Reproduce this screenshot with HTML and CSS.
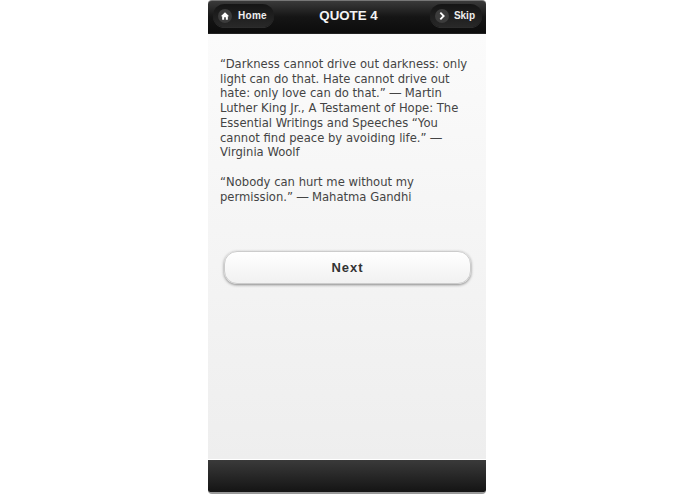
FILE: index.html
```html
<!DOCTYPE html>
<html lang="en">
<head>
  <meta charset="UTF-8" />
  <title>Quote 4</title>
  <link rel="stylesheet" href="styles.css">
</head>
<body>
  <div class="phone">
    <div class="header">
      <a class="head-btn" href="#">
        <span class="icon">
          <svg viewBox="0 0 12 12" width="10" height="10"><path d="M6 1.5 1 6.2h1.6V10.5h2.4V7.6h2V10.5h2.4V6.2H11z" fill="#fff"/></svg>
        </span>Home
      </a>
      <h1>QUOTE 4</h1>
      <a class="head-btn skip" href="#">
        <span class="icon">
          <svg viewBox="0 0 12 12" width="10" height="10"><path d="M4 2 8 6 4 10" fill="none" stroke="#fff" stroke-width="2.2"/></svg>
        </span>Skip
      </a>
    </div>

    <div class="content">
      <p>“Darkness cannot drive out darkness: only light can do that. Hate cannot drive out hate: only love can do that.” ― Martin Luther King Jr., A Testament of Hope: The Essential Writings and Speeches “You cannot find peace by avoiding life.” ― Virginia Woolf</p>
      <p>“Nobody can hurt me without my permission.” ― Mahatma Gandhi</p>
      <a class="next-btn" href="#">Next</a>
    </div>

    <div class="footer"></div>
  </div>
</body>
</html>
```

FILE: styles.css
```css
* { box-sizing: border-box; }

body {
  margin: 0;
  background: white;
  font-family: "Liberation Sans", Arial, sans-serif;
}

.phone {
  width: 278px;
  height: 494px;
  margin-left: 208px;
  display: flex;
  flex-direction: column;
}

/* Header */
.header {
  height: 34px;
  flex: none;
  display: grid;
  grid-template-columns: 1fr auto 1fr;
  align-items: center;
  padding: 0 4px 3px 5px;
  background: linear-gradient(#3a3a3a, #151515 50%, #0c0c0c);
  border-top: 1px solid #777;
  border-bottom: 1px solid #222;
  border-radius: 4px 4px 0 0;
}

.header h1 {
  margin: 0 0 0 2px;
  font-size: 13.3px;
  font-weight: bold;
  color: #f4f4f4;
}

.head-btn {
  height: 23px;
  padding: 0 7px 0 5px;
  display: flex;
  align-items: center;
  gap: 6px;
  font-size: 10px;
  font-weight: bold;
  letter-spacing: 0.3px;
  color: #eee;
  text-decoration: none;
  background: linear-gradient(#151515, #282828);
  border-radius: 12px;
  box-shadow: 0 1px 0 rgba(255,255,255,0.12);
  justify-self: start;
}

.head-btn.skip {
  justify-self: end;
  gap: 5px;
  letter-spacing: 0;
}

.icon {
  width: 14px;
  height: 14px;
  display: flex;
  align-items: center;
  justify-content: center;
  background: #3c3c3c;
  border-radius: 50%;
}

/* Content */
.content {
  flex: 1;
  padding: 23px 12px 0;
  background: linear-gradient(#fbfbfb, #eeeeee);
}

.content p {
  margin: 0 0 15px;
  font-family: "DejaVu Sans", sans-serif;
  font-size: 11.6px;
  line-height: 14.7px;
  color: #444;
}

.next-btn {
  display: block;
  height: 33px;
  margin: 46.7px 3px 0 4px;
  line-height: 31px;
  text-align: center;
  font-size: 13px;
  font-weight: bold;
  letter-spacing: 1px;
  color: #333;
  text-decoration: none;
  background: linear-gradient(#fff, #f1f1f1);
  border: 1px solid #ccc;
  border-radius: 13px;
  box-shadow: 0 1px 3px rgba(0,0,0,0.45);
}

/* Footer */
.footer {
  height: 35px;
  flex: none;
  background: linear-gradient(#3a3a3a, #141414);
  border-top: 1px solid #fff;
  border-bottom: 2px solid #999;
  border-radius: 0 0 4px 4px;
}
```
